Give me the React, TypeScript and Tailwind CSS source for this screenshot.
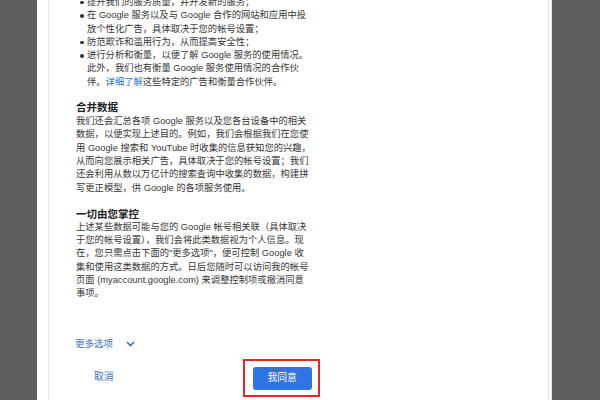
import React from 'react';

const font = "font-['Liberation_Sans','Noto_Sans_CJK_SC',sans-serif]";

const Line: React.FC<{ children: React.ReactNode }> = ({ children }) => (
  <div className="h-[13.3px] leading-[13.3px] whitespace-nowrap">{children}</div>
);

const Bullet: React.FC<{ lines: React.ReactNode[] }> = ({ lines }) => (
  <div className="flex">
    <div className="w-[11px] shrink-0 h-[13.3px] flex items-center">
      <span className="ml-[4px] w-[3.5px] h-[3.5px] rounded-full bg-[#333]" />
    </div>
    <div>
      {lines.map((l, i) => (
        <Line key={i}>{l}</Line>
      ))}
    </div>
  </div>
);

const Heading: React.FC<{ children: React.ReactNode; className?: string }> = ({ children, className }) => (
  <div className={`h-[14px] leading-[14px] text-[10.5px] font-bold text-[#202124] ${className ?? ''}`}>{children}</div>
);

const App: React.FC = () => {
  return (
    <div className={`w-[600px] h-[400px] bg-[#5f5f5f] flex overflow-hidden ${font}`}>
      <div className="w-[37px] shrink-0" />
      <div className="w-[515px] shrink-0 bg-white border-r border-[#e6e6e6] flex">
        <div className="ml-[11px] w-[501px] border-x border-[#e3e3e3] flex flex-col">
          <div className="mt-[-4px] pl-[27px] text-[9.3px] text-[#363636]">
            <Bullet lines={['提升我们的服务质量，并开发新的服务；']} />
            <Bullet lines={['在 Google 服务以及与 Google 合作的网站和应用中投', '放个性化广告，具体取决于您的帐号设置；']} />
            <Bullet lines={['防范欺诈和滥用行为，从而提高安全性；']} />
            <Bullet
              lines={[
                '进行分析和衡量，以便了解 Google 服务的使用情况。',
                '此外，我们也有衡量 Google 服务使用情况的合作伙',
                <>
                  伴。<span className="text-[#1a73e8]">详细了解</span>这些特定的广告和衡量合作伙伴。
                </>,
              ]}
            />

            <Heading className="mt-[11px]">合并数据</Heading>
            <div className="mt-[1px]">
              <Line>我们还会汇总各项 Google 服务以及您各台设备中的相关</Line>
              <Line>数据，以便实现上述目的。例如，我们会根据我们在您使</Line>
              <Line>用 Google 搜索和 YouTube 时收集的信息获知您的兴趣，</Line>
              <Line>从而向您展示相关广告，具体取决于您的帐号设置；我们</Line>
              <Line>还会利用从数以万亿计的搜索查询中收集的数据，构建拼</Line>
              <Line>写更正模型，供 Google 的各项服务使用。</Line>
            </div>

            <Heading className="mt-[12px]">一切由您掌控</Heading>
            <div>
              <Line>上述某些数据可能与您的 Google 帐号相关联（具体取决</Line>
              <Line>于您的帐号设置），我们会将此类数据视为个人信息。现</Line>
              <Line>在，您只需点击下面的"更多选项"，便可控制 Google 收</Line>
              <Line>集和使用这类数据的方式。日后您随时可以访问我的帐号</Line>
              <Line>页面 (myaccount.google.com) 来调整控制项或撤消同意</Line>
              <Line>事项。</Line>
            </div>

            <div className="mt-[36px] flex items-center h-[14px] text-[9.5px] text-[#3d6fcc]">
              <span className="ml-[-1px]">更多选项</span>
              <svg className="ml-[13px]" width="9" height="6" viewBox="0 0 9 6" fill="none">
                <path d="M1 1l3.5 3.5L8 1" stroke="#3d6fcc" strokeWidth="1.6" />
              </svg>
            </div>

            <div className="mt-[8px] flex items-center">
              <span className="ml-[18px] text-[9.8px] text-[#3d6fcc]">取消</span>
              <div className="ml-[129px] border-2 border-[#e5262b] pl-[8px] pr-[6px] pt-[6px] pb-[5px]">
                <button className="w-[59px] h-[23px] rounded-[3px] bg-[#2f74e4] text-white text-[9.8px] flex items-center justify-center">
                  我同意
                </button>
              </div>
            </div>
          </div>
        </div>
      </div>
    </div>
  );
};

export default App;
